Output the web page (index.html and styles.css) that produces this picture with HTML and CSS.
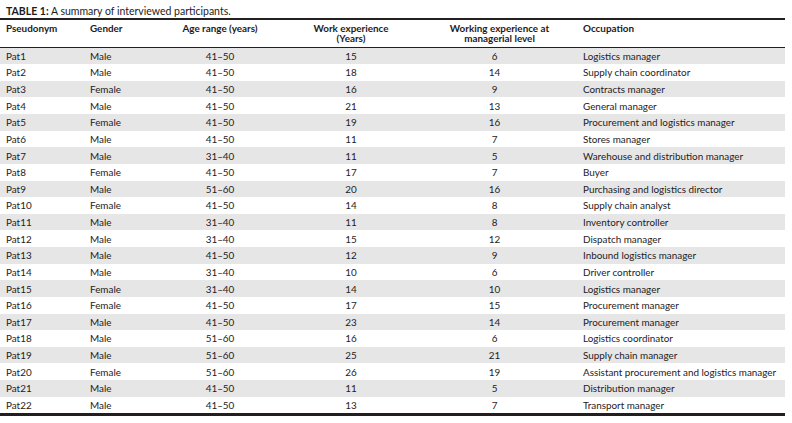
FILE: index.html
```html
<!DOCTYPE html>
<html>
<head>
<meta charset="utf-8">
<link rel="stylesheet" href="styles.css">
</head>
<body>
<div class="wrap">
<div class="caption"><b>TABLE 1:</b> A summary of interviewed participants.</div>
<table class="tbl">
<colgroup>
<col class="c1"><col class="c2"><col class="c3"><col class="c4"><col class="c5"><col class="c6">
</colgroup>
<thead>
<tr>
<th class="l">Pseudonym</th>
<th class="l">Gender</th>
<th class="c">Age range (years)</th>
<th class="c">Work experience<br>(Years)</th>
<th class="c wm">Working experience at<br>managerial level</th>
<th class="l">Occupation</th>
</tr>
</thead>
<tbody>
<tr><td>Pat1</td><td>Male</td><td class="c">41–50</td><td class="c">15</td><td class="c wm">6</td><td>Logistics manager</td></tr>
<tr><td>Pat2</td><td>Male</td><td class="c">41–50</td><td class="c">18</td><td class="c wm">14</td><td>Supply chain coordinator</td></tr>
<tr><td>Pat3</td><td>Female</td><td class="c">41–50</td><td class="c">16</td><td class="c wm">9</td><td>Contracts manager</td></tr>
<tr><td>Pat4</td><td>Male</td><td class="c">41–50</td><td class="c">21</td><td class="c wm">13</td><td>General manager</td></tr>
<tr><td>Pat5</td><td>Female</td><td class="c">41–50</td><td class="c">19</td><td class="c wm">16</td><td>Procurement and logistics manager</td></tr>
<tr><td>Pat6</td><td>Male</td><td class="c">41–50</td><td class="c">11</td><td class="c wm">7</td><td>Stores manager</td></tr>
<tr><td>Pat7</td><td>Male</td><td class="c">31–40</td><td class="c">11</td><td class="c wm">5</td><td>Warehouse and distribution manager</td></tr>
<tr><td>Pat8</td><td>Female</td><td class="c">41–50</td><td class="c">17</td><td class="c wm">7</td><td>Buyer</td></tr>
<tr><td>Pat9</td><td>Male</td><td class="c">51–60</td><td class="c">20</td><td class="c wm">16</td><td>Purchasing and logistics director</td></tr>
<tr><td>Pat10</td><td>Female</td><td class="c">41–50</td><td class="c">14</td><td class="c wm">8</td><td>Supply chain analyst</td></tr>
<tr><td>Pat11</td><td>Male</td><td class="c">31–40</td><td class="c">11</td><td class="c wm">8</td><td>Inventory controller</td></tr>
<tr><td>Pat12</td><td>Male</td><td class="c">31–40</td><td class="c">15</td><td class="c wm">12</td><td>Dispatch manager</td></tr>
<tr><td>Pat13</td><td>Male</td><td class="c">41–50</td><td class="c">12</td><td class="c wm">9</td><td>Inbound logistics manager</td></tr>
<tr><td>Pat14</td><td>Male</td><td class="c">31–40</td><td class="c">10</td><td class="c wm">6</td><td>Driver controller</td></tr>
<tr><td>Pat15</td><td>Female</td><td class="c">31–40</td><td class="c">14</td><td class="c wm">10</td><td>Logistics manager</td></tr>
<tr><td>Pat16</td><td>Female</td><td class="c">41–50</td><td class="c">17</td><td class="c wm">15</td><td>Procurement manager</td></tr>
<tr><td>Pat17</td><td>Male</td><td class="c">41–50</td><td class="c">23</td><td class="c wm">14</td><td>Procurement manager</td></tr>
<tr><td>Pat18</td><td>Male</td><td class="c">51–60</td><td class="c">16</td><td class="c wm">6</td><td>Logistics coordinator</td></tr>
<tr><td>Pat19</td><td>Male</td><td class="c">51–60</td><td class="c">25</td><td class="c wm">21</td><td>Supply chain manager</td></tr>
<tr><td>Pat20</td><td>Female</td><td class="c">51–60</td><td class="c">26</td><td class="c wm">19</td><td>Assistant procurement and logistics manager</td></tr>
<tr><td>Pat21</td><td>Male</td><td class="c">41–50</td><td class="c">11</td><td class="c wm">5</td><td>Distribution manager</td></tr>
<tr><td>Pat22</td><td>Male</td><td class="c">41–50</td><td class="c">13</td><td class="c wm">7</td><td>Transport manager</td></tr>
</tbody>
</table>
</div>
</body>
</html>
```
FILE: styles.css
```css
html, body {
  margin: 0;
  padding: 0;
  background: #ffffff;
}
body {
  font-family: "Lato", "Liberation Sans", sans-serif;
  color: #1e1b1c;
  font-size: 9.9px;
}
.wrap {
  width: 785px;
}
.caption {
  box-sizing: border-box;
  padding: 5px 0 0 6px;
  height: 18px;
  line-height: 12px;
  font-size: 10.5px;
}
.caption b {
  font-weight: 700;
}
.tbl {
  width: 785px;
  border-collapse: separate;
  border-spacing: 0;
  table-layout: fixed;
}
.c1 { width: 84px; }
.c2 { width: 66px; }
.c3 { width: 140px; }
.c4 { width: 122px; }
.c5 { width: 165px; }
.c6 { width: 208px; }
.tbl th {
  font-weight: 700;
  vertical-align: top;
  line-height: 10px;
  padding: 3px 0 0 6px;
  height: 29.5px;
  box-sizing: border-box;
  text-align: left;
  border-top: 2px solid #231f20;
  border-bottom: 1px solid #231f20;
}
.tbl th.c { text-align: center; padding-left: 0; }
.tbl td {
  height: 16.64px;
  box-sizing: border-box;
  padding: 0 0 0 6px;
  line-height: 16px;
  vertical-align: middle;
  white-space: nowrap;
}
.tbl td.c { text-align: center; padding-left: 0; }
.tbl .wm { padding-left: 10px; }
.tbl th.wm { padding-left: 10px; }
.tbl tbody tr:nth-child(odd) td { background: #e6e6e6; }
.tbl tbody tr:last-child td {
  height: 19.64px;
  border-bottom: 3px solid #231f20;
}
```
